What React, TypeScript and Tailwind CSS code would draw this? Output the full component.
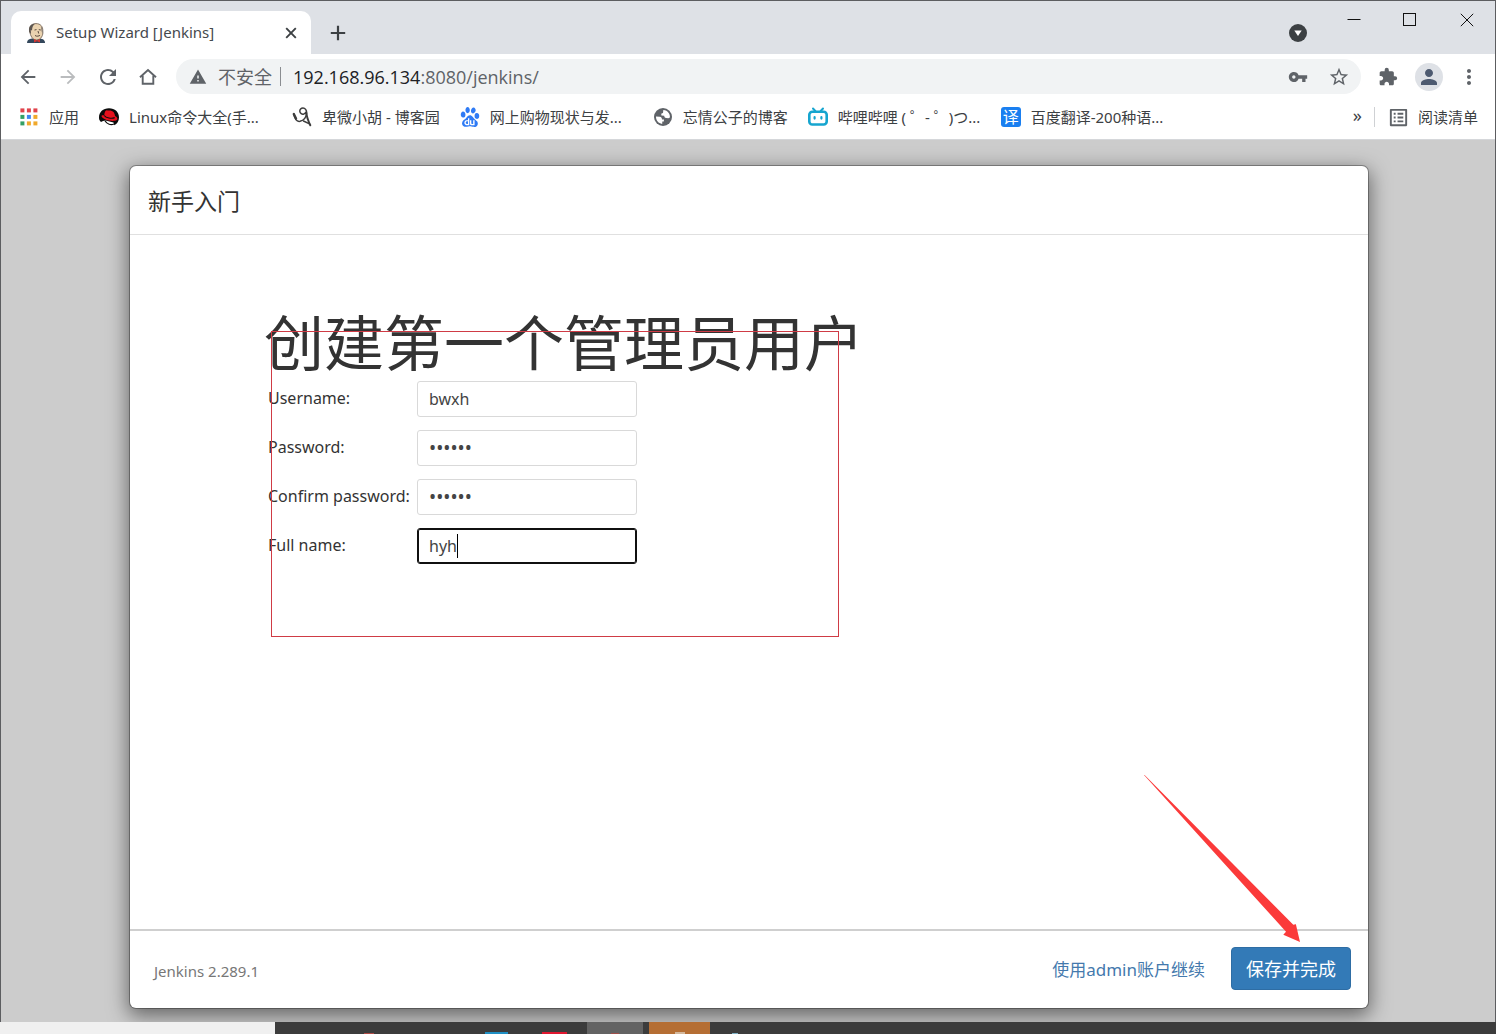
import { useState, type ReactNode } from "react";
import {
    MdArrowBack,
    MdArrowForward,
    MdExtension,
    MdMoreVert,
    MdOutlineListAlt,
    MdPerson,
    MdRefresh,
    MdStarBorder,
    MdVpnKey,
    MdWarning,
} from "react-icons/md";
import { SiBaidu } from "react-icons/si";

function JenkinsIcon() {
    return (
        <svg viewBox="0 0 20 20" className="w-5 h-5 shrink-0">
            <path d="M1 20 C1 17 3 16 6 15.500 L14 15.500 C17 16 19 17 19 20 Z" fill="#33475b" />
            <path d="M3.500 8 C3 3 6 .6 10 .6 C14.500 .6 17 3.500 16.800 8 C17.500 12 15 17 10.500 17 C6.500 17 4.500 13 3.500 8 Z" fill="#ead3b0" stroke="#6b5a4c" strokeWidth=".8" />
            <path d="M3.200 9 C2.400 4 4.500 1 9 .8 C6.500 2.500 6.300 5 6 7.500 L4.800 7 L5 11 Z" fill="#5b5550" />
            <path d="M14.800 3 C17 5 17.300 8 16.500 11 L15.500 8 Z" fill="#8b8178" />
            <path d="M8.500 7 L10.500 6.600 M12.800 6.600 L14.800 7 M9 12.500 C11 13.800 13 13 14 12.300 M12 8 L12.700 10.500" fill="none" stroke="#4a3b32" strokeWidth=".9" />
            <path d="M8 16 L11 17.400 L14 16 L14 19.600 L11 18.300 L8 19.600 Z" fill="#d33833" />
        </svg>
    );
}

function HomeIcon() {
    return (
        <svg viewBox="0 0 18 18" className="w-[18px] h-[18px]" fill="none" stroke="#5f6368" strokeWidth="1.900">
            <path d="M1 9.300 L9 2 L17 9.300" />
            <path d="M3.700 7.500 V15.800 H14.300 V7.500" />
        </svg>
    );
}

function AppsIcon() {
    const colors = ["#e0434b", "#e0434b", "#e0434b", "#34a065", "#3f86f0", "#f0a92c", "#34a065", "#f0a92c", "#f0a92c"];
    return (
        <svg viewBox="0 0 18 18" className="w-[18px] h-[18px] mx-px">
            {colors.map((c, i) => (
                <rect key={i} x={0.4 + (i % 3) * 6.5} y={0.4 + Math.floor(i / 3) * 6.5} width="4" height="4" fill={c} />
            ))}
        </svg>
    );
}

function RedHatIcon() {
    return (
        <svg viewBox="0 0 20 20" className="w-5 h-5">
            <path d="M0 10.500 C0 5 4 1.200 10 1.200 C16 1.200 20 5 20 10.500 C20 14 18 17 15.300 18.300 L14.500 15.500 L6.500 13.500 L4 14 L2 15 C.6 13.800 0 12.500 0 10.500 Z" fill="#0b0b0b" />
            <path d="M5.200 8.500 C5.500 5 6.500 3.200 8 3.300 C9.500 3.700 10 3.300 11.500 3.500 C14.500 4 15.600 6 16.100 9 C18.500 10.300 19 12 17.800 13 C14 15.200 4.500 13 2.600 9.500 C2.200 8.300 3.500 8 5.200 8.500 Z" fill="#e6101c" />
            <path d="M5.200 8.500 C7 11 12.500 12 15.700 10.600" fill="none" stroke="#0b0b0b" strokeWidth="1.200" />
            <path d="M6 13.800 C8 17.500 12 18.200 15 17" fill="none" stroke="#0b0b0b" strokeWidth="1.200" />
        </svg>
    );
}

function CnblogsIcon() {
    return (
        <svg viewBox="0 0 20 20" className="w-5 h-5" fill="none" stroke="#3c3c3c" strokeLinecap="round">
            <path d="M1.800 7 C2.500 11.500 4.500 15 8 14.300 C11 13.600 14.200 11 14.600 6 C14.800 3 13 1 11 1 C9 1 7.700 2.500 7.800 4.200 C8 6.500 10 7.500 11.800 7 C13 6.600 14 5.500 14.400 4.500" strokeWidth="1.500" />
            <path d="M1.800 7 L4 11.500" strokeWidth="2.400" />
            <path d="M14.400 6 C14.800 10 16.500 14.500 18.300 18.300" strokeWidth="2" />
            <path d="M11.500 14 L17.500 16.800" strokeWidth="1.400" />
        </svg>
    );
}

function GlobeIcon() {
    return (
        <svg viewBox="0 0 18 18" className="w-[18px] h-[18px] mx-px">
            <circle cx="9" cy="9" r="9" fill="#5f6368" />
            <path d="M2 8.600 L5.800 8.800 C7.400 9 8 10.200 8 11.400 L10 11.600 L9.800 13.400 L8.300 13.600 L8.200 15.900 C4.500 15.600 1.900 12.600 2 8.600 Z" fill="#fff" />
            <path d="M9.300 2 C11.500 2 13.500 3.200 14.700 5 C15.600 6.300 16 7.800 15.900 9.500 L14.400 10.200 L12.200 10.100 C10.600 9.900 10.300 8.600 10.200 7.700 L7.400 7.400 C7 5.800 7.600 5.200 9 5.100 Z" fill="#fff" />
        </svg>
    );
}

function BilibiliIcon() {
    return (
        <svg viewBox="0 0 20 20" className="w-5 h-5" fill="none" stroke="#16a5cf" strokeLinecap="round">
            <rect x="1.300" y="4.700" width="17.400" height="12.800" rx="3" strokeWidth="2.600" />
            <path d="M5 1.500 L7.300 4 M15 1.500 L12.700 4" strokeWidth="2" />
            <path d="M6.600 10.200 V11.600 M13.400 10.200 V11.600" strokeWidth="2.200" />
        </svg>
    );
}

const bookmarks: { title: string; icon: ReactNode; clipped?: boolean }[] = [
    { title: "应用", icon: <AppsIcon /> },
    { title: "Linux命令大全(手...", icon: <RedHatIcon />, clipped: true },
    { title: "卑微小胡 - 博客园", icon: <CnblogsIcon /> },
    { title: "网上购物现状与发...", icon: <SiBaidu className="w-5 h-5 text-[#2f7bf5]" />, clipped: true },
    { title: "忘情公子的博客", icon: <GlobeIcon /> },
    { title: "哔哩哔哩 ( ゜- ゜)つ...", icon: <BilibiliIcon />, clipped: true },
    {
        title: "百度翻译-200种语...",
        icon: <span className="w-5 h-5 rounded-[3px] bg-[#1a7ff0] text-white text-base leading-5 text-center">译</span>,
        clipped: true,
    },
];

function TabStrip() {
    return (
        <div className="flex h-[53px] items-end bg-[#dee1e6] pl-[10px]">
            <div className="flex h-[43px] w-[300px] items-center rounded-t-[10px] bg-white pl-[15px] pr-3">
                <JenkinsIcon />
                <span className="ml-[10px] flex-1 text-[15px] text-[#45494d]">Setup Wizard [Jenkins]</span>
                <button aria-label="关闭标签页" className="p-0.5">
                    <svg viewBox="0 0 12 12" className="w-3 h-3" stroke="#3c4043" strokeWidth="1.900">
                        <path d="M1.200 1.200 L10.800 10.800 M10.800 1.200 L1.200 10.800" />
                    </svg>
                </button>
            </div>
            <button aria-label="新标签页" className="mb-[13px] ml-[19px]">
                <svg viewBox="0 0 16 16" className="w-4 h-4" stroke="#3c4043" strokeWidth="2.200">
                    <path d="M8 .8 V15.200 M.8 8 H15.200" />
                </svg>
            </button>
            <div className="ml-auto flex h-full items-start">
                <button aria-label="搜索标签页" className="mt-[23px] mr-10">
                    <svg viewBox="0 0 18 18" className="w-[18px] h-[18px]">
                        <circle cx="9" cy="9" r="9" fill="#3c4043" />
                        <path d="M5.300 6.500 H12.700 L9 12 Z" fill="#fff" />
                    </svg>
                </button>
                <button aria-label="最小化" className="mt-3 mr-[42px]">
                    <svg viewBox="0 0 14 14" className="w-[14px] h-[14px]" stroke="#111">
                        <path d="M.5 6.500 H13.500" />
                    </svg>
                </button>
                <button aria-label="最大化" className="mt-3 mr-[43px]">
                    <svg viewBox="0 0 14 14" className="w-[14px] h-[14px]" stroke="#111" fill="none">
                        <rect x=".5" y=".5" width="12" height="12" />
                    </svg>
                </button>
                <button aria-label="关闭" className="mt-3 mr-[21px]">
                    <svg viewBox="0 0 14 14" className="w-[14px] h-[14px]" stroke="#111">
                        <path d="M.8 .8 L13.200 13.200 M13.200 .8 L.8 13.200" />
                    </svg>
                </button>
            </div>
        </div>
    );
}

function Toolbar() {
    return (
        <div className="flex h-[45px] items-center pl-4 pr-[14px]">
            <div className="flex items-center gap-[18px] text-[22px] text-[#5f6368]">
                <button aria-label="后退"><MdArrowBack /></button>
                <button aria-label="前进" className="text-[#babcbe]"><MdArrowForward /></button>
                <button aria-label="重新加载"><MdRefresh className="w-6 h-6 -mx-px" /></button>
                <button aria-label="主页" className="px-0.5"><HomeIcon /></button>
            </div>
            <div className="ml-[17px] flex h-[35px] flex-1 items-center rounded-full bg-[#f1f3f4] px-[13px] text-lg text-[#5f6368]">
                <MdWarning className="w-[18px] h-[18px]" />
                <span className="ml-[11px]">不安全</span>
                <span className="mx-2 h-[19px] w-px bg-[#8a8d91]" />
                <div className="ml-1 flex-1 font-['Open_Sans']"><span className="text-[#202124]">192.168.96.134</span>:8080/jenkins/</div>
                <button aria-label="密码" className="mr-5"><MdVpnKey className="w-5 h-5" /></button>
                <button aria-label="收藏"><MdStarBorder className="w-[22px] h-[22px] -mr-0.5" /></button>
            </div>
            <div className="ml-[17px] flex items-center text-[#5f6368]">
                <button aria-label="扩展程序"><MdExtension className="w-5 h-5" /></button>
                <button aria-label="用户" className="ml-[17px] flex h-7 w-7 items-center justify-center rounded-full bg-[#dee1e6]">
                    <MdPerson className="w-6 h-6 text-[#4d5a70]" />
                </button>
                <button aria-label="菜单" className="ml-[14px]"><MdMoreVert className="w-6 h-6" /></button>
            </div>
        </div>
    );
}

function BookmarkBar() {
    return (
        <nav className="flex h-[41px] items-start border-b border-[#d5d7da] pl-[18px] pr-[17px] text-[15px] text-[#3c4043]">
            <div className="flex h-9 flex-1 items-center gap-5">
                {bookmarks.map((b) => (
                    <a key={b.title} href="#" className="flex items-center gap-[10px] whitespace-nowrap">
                        {b.icon}
                        <span className={b.clipped ? "w-[143px]" : ""}>{b.title}</span>
                    </a>
                ))}
            </div>
            <div className="flex h-9 items-center">
                <button className="pb-1 text-lg">»</button>
                <span className="mx-3 h-5 w-px bg-[#cfd1d4]" />
                <a href="#" className="flex items-center gap-2">
                    <MdOutlineListAlt className="w-[23px] h-[23px] text-[#5f6368]" />
                    阅读清单
                </a>
            </div>
        </nav>
    );
}

const fieldClass = "h-9 w-[220px] rounded-[3px] border bg-white px-[11px] text-[#444] outline-none";

function SetupWizard() {
    const [form, setForm] = useState({ username: "bwxh", password: "123456", confirm: "123456", fullname: "hyh" });

    const rows = [
        { id: "username", label: "Username:", type: "text" },
        { id: "password", label: "Password:", type: "password" },
        { id: "confirm", label: "Confirm password:", type: "password" },
        { id: "fullname", label: "Full name:", type: "text" },
    ] as const;

    return (
        <main className="relative flex flex-1 flex-col rounded-md bg-white shadow-[0_0_0_1px_rgba(0,0,0,0.3),0_6px_20px_2px_rgba(0,0,0,0.5)]">
            <header className="flex h-[69px] items-center border-b border-[#e0e0e0] px-[18px] pt-0.5">
                <h4 className="text-[23px] text-[#333]">新手入门</h4>
            </header>
            <section className="relative flex-1 pl-[138px] pt-[70px] text-[#333]">
                <h1 className="-ml-1 text-[60px] leading-[76px]">创建第一个管理员用户</h1>
                <form className="grid grid-cols-[149px_220px] gap-y-[13px]">
                    {rows.map((row) => (
                        <div key={row.id} className="contents">
                            <label htmlFor={row.id} className="text-base leading-[34px] whitespace-nowrap">{row.label}</label>
                            <div className="relative h-9">
                                <input
                                    id={row.id}
                                    type={row.type}
                                    value={form[row.id]}
                                    onChange={(e) => setForm({ ...form, [row.id]: e.target.value })}
                                    className={`${fieldClass} ${row.type === "password" ? "text-[19px]" : "text-base"} ${row.id === "fullname" ? "border-[#101010] ring-1 ring-inset ring-[#101010]" : "border-[#d9d9d9]"}`}
                                />
                                {row.id === "fullname" && <span className="absolute left-10 top-[6px] h-6 w-px bg-black" />}
                            </div>
                        </div>
                    ))}
                </form>
                <div className="pointer-events-none absolute left-[141px] top-24 h-[306px] w-[568px] border border-[#cf3b45]" />
            </section>
            <footer className="flex h-[79px] items-center border-t-2 border-[#cfcfcf] pb-0.5 pl-6 pr-[17px]">
                <span className="flex-1 pt-1.5 text-[15px] text-[#777]">Jenkins 2.289.1</span>
                <button className="mr-[26px] pt-0.5 text-[17px] text-[#4479ad]">使用admin账户继续</button>
                <button className="h-[43px] w-[120px] rounded border border-[#2e6da4] bg-[#337ab7] text-lg text-white">保存并完成</button>
            </footer>
            {/* pointer to the save button */}
            <svg viewBox="0 0 156 167" className="pointer-events-none absolute bottom-[66px] right-[68px] h-[167px] w-[156px]">
                <path d="M0 0 L.6 0 L149.300 149.800 L151.700 149.300 L151.700 148.500 L156 167 L139.300 159.700 L142 156.700 Z" fill="#fb3a3a" />
            </svg>
        </main>
    );
}

function Taskbar() {
    return (
        <div className="flex h-3 items-end bg-[#3c3c3c]">
            <div className="h-full w-[275px] bg-[#f0f0f0]" />
            <div className="ml-[89px] h-px w-[10px] bg-[#b04a45]" />
            <div className="ml-[111px] h-0.5 w-[23px] bg-[#1f8fc4]" />
            <div className="ml-[34px] h-0.5 w-[25px] bg-[#e0162f]" />
            <div className="ml-5 flex h-full w-14 items-end justify-center bg-[#636363]">
                <div className="h-px w-2 bg-[#a04f4a]" />
            </div>
            <div className="ml-1.5 flex h-full w-[61px] items-end justify-center bg-[#b56e33]">
                <div className="h-0.5 w-[10px] bg-[#d3b79b]" />
            </div>
            <div className="ml-[22px] h-px w-1.5 bg-[#7fb0c4]" />
        </div>
    );
}

export default function App() {
    return (
        <div className="flex min-h-screen flex-col font-['Noto_Sans','Noto_Sans_CJK_SC',sans-serif]">
            <div className="flex flex-1 flex-col border-x border-t border-[#5c5d60] bg-white">
                <TabStrip />
                <Toolbar />
                <BookmarkBar />
                <div className="flex flex-1 flex-col overflow-hidden bg-[#cccccc] pb-[14px] pl-[129px] pr-[127px] pt-[26px]">
                    <SetupWizard />
                </div>
            </div>
            <Taskbar />
        </div>
    );
}
